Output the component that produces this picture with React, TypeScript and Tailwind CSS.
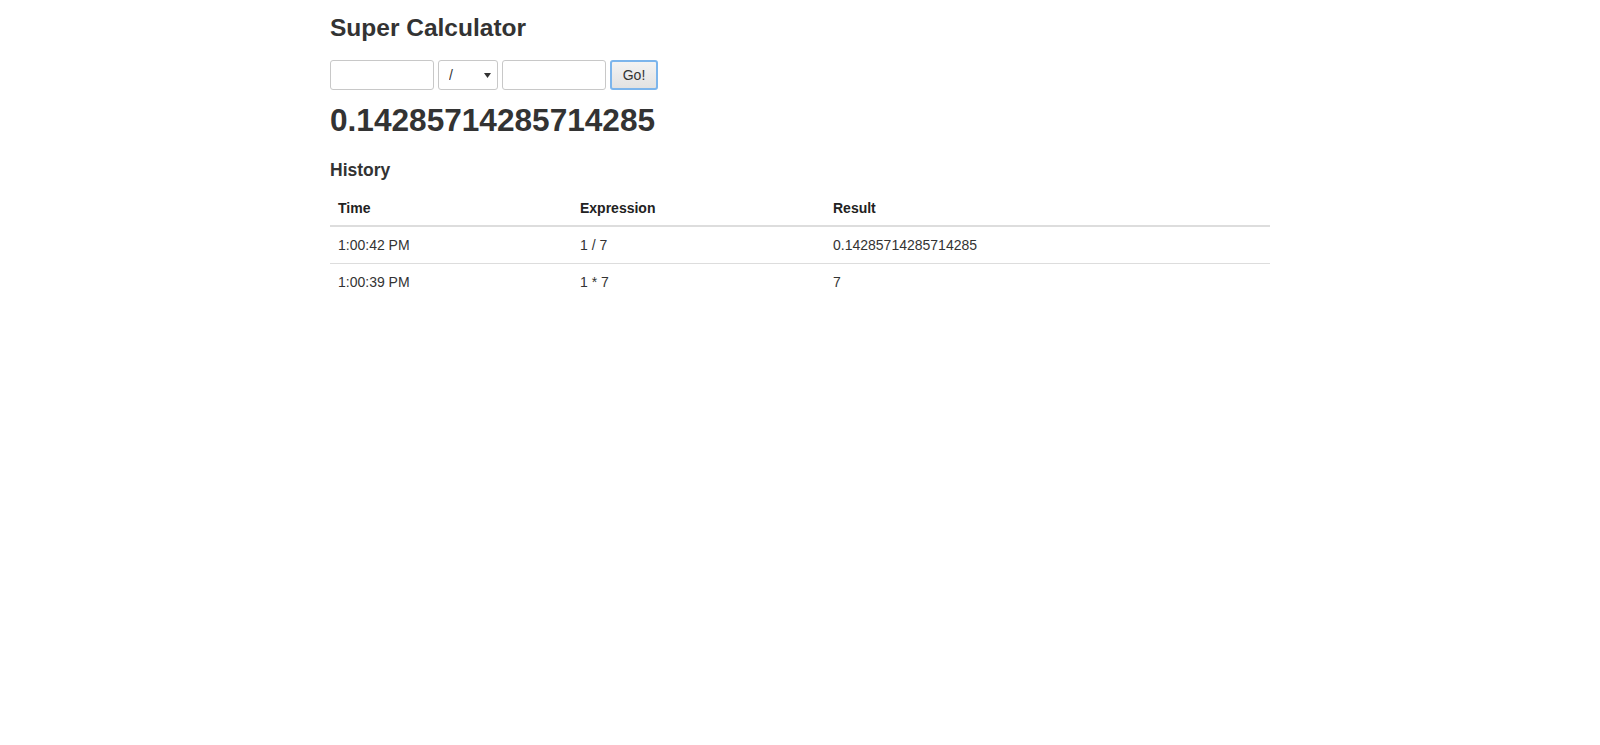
import {useState} from "react";

type HistoryRow = {time: string; expression: string; result: string};

const history: HistoryRow[] = [
  {time: "1:00:42 PM", expression: "1 / 7", result: "0.14285714285714285"},
  {time: "1:00:39 PM", expression: "1 * 7", result: "7"},
];

export default function App() {
  const [left, setLeft] = useState("");
  const [right, setRight] = useState("");
  const [operator, setOperator] = useState("/");

  return (
    <div className="min-h-screen bg-white text-[#333] font-['Liberation_Sans',Arial,sans-serif]">
      <div className="w-[970px] mx-auto px-[15px]">
        <h3 className="mt-[15px] text-[24.5px] leading-[26px] font-bold">Super Calculator</h3>

        <div className="mt-[19px] flex items-center gap-1">
          <input
            value={left}
            onChange={(e) => setLeft(e.target.value)}
            className="h-[30px] w-[104px] rounded-[3px] border border-[#c8c8c8] bg-white px-2 text-[14px] outline-none"
          />

          <div className="relative">
            <select
              value={operator}
              onChange={(e) => setOperator(e.target.value)}
              className="h-[30px] w-[60px] appearance-none rounded-[3px] border border-[#c8c8c8] bg-white pl-[10px] text-[14px] text-[#333] outline-none"
            >
              <option value="+">+</option>
              <option value="-">-</option>
              <option value="*">*</option>
              <option value="/">/</option>
            </select>
            <svg className="pointer-events-none absolute right-[7px] top-[13px]" width="7" height="5" viewBox="0 0 7 5">
              <path d="M0 0h7L3.5 5z" fill="#333"/>
            </svg>
          </div>

          <input
            value={right}
            onChange={(e) => setRight(e.target.value)}
            className="h-[30px] w-[104px] rounded-[3px] border border-[#c8c8c8] bg-white px-2 text-[14px] outline-none"
          />

          <button className="h-[30px] w-[48px] rounded-[3px] border-2 border-[#7cb5ec] bg-gradient-to-b from-[#f3f3f3] to-[#e2e2e2] text-[14px] text-[#333]">
            Go!
          </button>
        </div>

        <h1 className="mt-[13px] text-[31.6px] leading-[34px] font-bold">0.14285714285714285</h1>

        <h4 className="mt-[24px] text-[17.5px] leading-[19px] font-bold">History</h4>

        <table className="mt-[10px] w-full text-[14px] leading-[20px]">
          <thead>
            <tr>
              <th className="w-[242px] border-b-2 border-[#ddd] px-2 pt-2 pb-[7px] text-left font-bold text-[#222]">Time</th>
              <th className="w-[253px] border-b-2 border-[#ddd] px-2 pt-2 pb-[7px] text-left font-bold text-[#222]">Expression</th>
              <th className="border-b-2 border-[#ddd] px-2 pt-2 pb-[7px] text-left font-bold text-[#222]">Result</th>
            </tr>
          </thead>
          <tbody>
            {history.map((row) => (
              <tr key={row.time}>
                <td className="border-t border-[#ddd] p-2">{row.time}</td>
                <td className="border-t border-[#ddd] p-2">{row.expression}</td>
                <td className="border-t border-[#ddd] p-2">{row.result}</td>
              </tr>
            ))}
          </tbody>
        </table>
      </div>
    </div>
  );
}
